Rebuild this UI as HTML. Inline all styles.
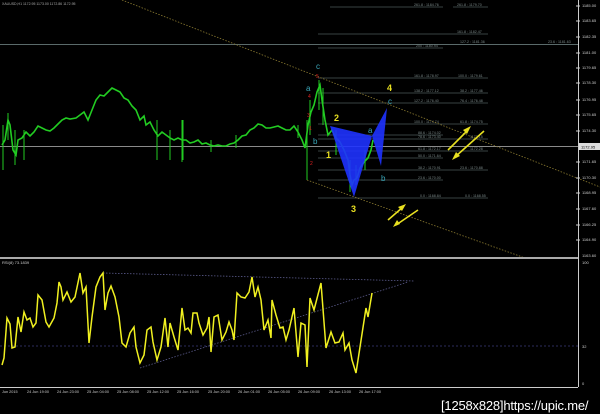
<!DOCTYPE html>
<html><head><meta charset="utf-8"><style>
html,body{margin:0;padding:0;background:#000;width:600px;height:414px;overflow:hidden}
svg{display:block}
text{font-family:"Liberation Sans",sans-serif}
</style></head><body>
<svg width="600" height="414" viewBox="0 0 600 414" xmlns="http://www.w3.org/2000/svg">
<rect width="600" height="414" fill="#000"/>
<text x="2" y="5" font-size="3.5" fill="#aaa">XAUUSD,H1  1172.95 1173.00 1172.86 1172.95</text>
<line x1="0" y1="44.5" x2="578" y2="44.5" stroke="#5a6a6a" stroke-width="1"/>
<line x1="0" y1="146.5" x2="578" y2="146.5" stroke="#8a8a8a" stroke-width="1"/>
<g stroke="#4a5858" stroke-width="0.8">
<line x1="330" y1="7" x2="443" y2="7"/><line x1="453" y1="7" x2="488" y2="7"/>
<line x1="318" y1="34" x2="488" y2="34"/>
<line x1="318" y1="48" x2="443" y2="48"/>
<line x1="318" y1="78" x2="488" y2="78"/>
<line x1="318" y1="93" x2="488" y2="93"/>
<line x1="318" y1="103" x2="488" y2="103"/>
<line x1="318" y1="124" x2="488" y2="124"/>
<line x1="318" y1="135" x2="443" y2="135"/>
<line x1="318" y1="139" x2="488" y2="139"/>
<line x1="318" y1="151" x2="488" y2="151"/>
<line x1="318" y1="158" x2="443" y2="158"/>
<line x1="318" y1="170" x2="488" y2="170"/>
<line x1="318" y1="180" x2="443" y2="180"/>
<line x1="318" y1="198" x2="488" y2="198"/>
</g>
<g font-size="3.6" fill="#7a8888">
<text x="414" y="6">261.8 : 1184.76</text><text x="457" y="6">261.8 : 1179.70</text>
<text x="457" y="33">161.8 : 1182.47</text>
<text x="460" y="43">127.2 : 1181.36</text><text x="548" y="43">23.6 : 1181.63</text>
<text x="416" y="47">200 : 1180.94</text>
<text x="414" y="77">161.8 : 1178.97</text><text x="458" y="77">100.0 : 1179.61</text>
<text x="414" y="92">138.2 : 1177.12</text><text x="460" y="92">38.2 : 1177.46</text>
<text x="414" y="102">127.2 : 1176.40</text><text x="460" y="102">76.4 : 1176.48</text>
<text x="414" y="123">100.0 : 1174.74</text><text x="460" y="123">61.8 : 1174.75</text>
<text x="418" y="134">88.6 : 1174.02</text>
<text x="418" y="138">78.6 : 1173.40</text><text x="470" y="138">1173.15</text>
<text x="418" y="150">61.8 : 1172.17</text><text x="470" y="150">1172.28</text>
<text x="418" y="157">50.0 : 1171.64</text>
<text x="418" y="169">38.2 : 1170.91</text><text x="460" y="169">23.6 : 1170.88</text>
<text x="418" y="179">23.6 : 1170.00</text>
<text x="420" y="197">0.0 : 1168.84</text><text x="465" y="197">0.0 : 1168.55</text>
</g>
<line x1="122" y1="0" x2="600" y2="187" stroke="#8a7a30" stroke-width="0.8" stroke-dasharray="1.5,1.5"/>
<line x1="307" y1="180" x2="525" y2="258" stroke="#8a7a30" stroke-width="0.8" stroke-dasharray="1.5,1.5"/>
<polyline fill="none" stroke="#22cc22" stroke-width="1.6" points="2,145 5,140 8,120 10,125 13,150 16,155 18,140 22,138 26,132 30,136 34,132 38,126 42,128 46,130 50,131 54,128 58,124 62,120 66,118 70,119 76,118 80,115 84,112 88,120 92,110 96,100 100,95 104,96 108,92 112,88 116,90 120,92 124,98 128,100 132,106 136,110 140,120 144,116 146,125 150,122 154,130 158,136 162,132 166,135 170,138 174,140 178,138 182,140 186,140 190,143 194,142 198,140 202,144 206,143 210,145 214,146 218,145 222,146 226,146 230,144 234,143 238,140 242,136 246,135 250,130 254,128 258,124 262,125 266,128 270,128 274,127 278,126 282,128 286,130 290,130 294,126 298,132 302,140 305,148 308,125 311,112 314,105 317,92 320,85 322,100 325,120 328,135 332,130 336,138 340,142 344,150 348,160 350,175 352,185 354,180 357,178 360,168 364,162 368,158 371,150 373,140"/>
<g stroke="#22cc22" stroke-width="1">
<line x1="3" y1="125" x2="3" y2="170"/><line x1="8" y1="113" x2="8" y2="140"/><line x1="15" y1="130" x2="15" y2="165"/><line x1="24" y1="130" x2="24" y2="160"/>
<line x1="157" y1="120" x2="157" y2="160"/><line x1="170" y1="130" x2="170" y2="160"/><line x1="182" y1="120" x2="182" y2="162"/><line x1="183" y1="120" x2="183" y2="160"/>
<line x1="211" y1="140" x2="211" y2="152"/><line x1="236" y1="135" x2="236" y2="148"/><line x1="298" y1="125" x2="298" y2="138"/>
<line x1="307" y1="120" x2="307" y2="180"/><line x1="310" y1="100" x2="310" y2="135"/><line x1="319" y1="80" x2="319" y2="110"/><line x1="323" y1="88" x2="323" y2="125"/>
<line x1="336" y1="130" x2="336" y2="155"/><line x1="350" y1="160" x2="350" y2="192"/><line x1="356" y1="165" x2="356" y2="185"/><line x1="365" y1="150" x2="365" y2="170"/>
</g>
<polygon points="330,126 354,197 372,136" fill="#1e32ff" opacity="0.9"/>
<polygon points="372,136 387,108 381,166" fill="#1e32ff" opacity="0.9"/>
<g font-size="8" fill="#3aa6b8">
<text x="316" y="69">c</text><text x="306" y="91">a</text><text x="313" y="144">b</text>
<text x="368" y="133">a</text><text x="388" y="104">c</text><text x="381" y="181">b</text>
</g>
<g font-size="5" fill="#dd2222">
<text x="316" y="78">5</text><text x="308" y="98">4</text><text x="307" y="117">3</text><text x="309" y="130">1</text><text x="310" y="165">2</text>
</g>
<g font-size="9" font-weight="bold" fill="#e8e020">
<text x="387" y="91">4</text><text x="334" y="121">2</text><text x="326" y="158">1</text><text x="351" y="212">3</text>
</g>
<g stroke="#e8e020" stroke-width="1.6" fill="#e8e020">
<line x1="448" y1="150" x2="468" y2="130"/><polygon points="471,126 463,130 467,134" stroke="none"/>
<line x1="484" y1="131" x2="455" y2="157"/><polygon points="452,160 456,152 460,156" stroke="none"/>
<line x1="388" y1="220" x2="403" y2="207"/><polygon points="406,204 398,207 402,211" stroke="none"/>
<line x1="418" y1="210" x2="396" y2="225"/><polygon points="393,227 397,220 400,224" stroke="none"/>
</g>
<line x1="578.5" y1="0" x2="578.5" y2="387" stroke="#ccc" stroke-width="1"/>
<g font-size="4" fill="#ccc">
<text x="582" y="7">1185.00</text><text x="582" y="22">1183.65</text><text x="582" y="38">1182.35</text>
<text x="582" y="54">1181.00</text><text x="582" y="69">1179.65</text><text x="582" y="84">1178.30</text>
<text x="582" y="101">1176.95</text><text x="582" y="116">1175.65</text><text x="582" y="132">1174.30</text>
<text x="582" y="163">1171.65</text><text x="582" y="179">1170.30</text><text x="582" y="194">1168.95</text>
<text x="582" y="210">1167.60</text><text x="582" y="226">1166.25</text><text x="582" y="241">1164.90</text>
<text x="582" y="257">1163.60</text>
<text x="582" y="264">100</text><text x="582" y="348">32</text><text x="582" y="385">0</text>
</g>
<rect x="579" y="143" width="21" height="7" fill="#ddd"/>
<text x="581" y="148.5" font-size="4" fill="#000">1172.95</text>
<g stroke="#ccc" stroke-width="1">
<line x1="576" y1="6" x2="580" y2="6"/><line x1="576" y1="21" x2="580" y2="21"/><line x1="576" y1="37" x2="580" y2="37"/><line x1="576" y1="53" x2="580" y2="53"/><line x1="576" y1="68" x2="580" y2="68"/><line x1="576" y1="83" x2="580" y2="83"/><line x1="576" y1="100" x2="580" y2="100"/><line x1="576" y1="115" x2="580" y2="115"/><line x1="576" y1="131" x2="580" y2="131"/><line x1="576" y1="162" x2="580" y2="162"/><line x1="576" y1="178" x2="580" y2="178"/><line x1="576" y1="193" x2="580" y2="193"/><line x1="576" y1="209" x2="580" y2="209"/><line x1="576" y1="225" x2="580" y2="225"/><line x1="576" y1="240" x2="580" y2="240"/>
</g>
<rect x="0" y="257" width="578" height="2" fill="#aaa"/>
<text x="2" y="264" font-size="4" fill="#ccc">RSI(8) 73.1839</text>
<line x1="0" y1="346" x2="578" y2="346" stroke="#3a3a7a" stroke-width="0.8" stroke-dasharray="2,2"/>
<line x1="103" y1="273" x2="414" y2="281" stroke="#5a5a8a" stroke-width="0.8" stroke-dasharray="1.5,1.5"/>
<line x1="140" y1="368" x2="408" y2="282" stroke="#5a5a8a" stroke-width="0.8" stroke-dasharray="1.5,1.5"/>
<polyline fill="none" stroke="#f0f020" stroke-width="1.5" points="2,365 4,358 7,318 10,324 12,348 15,347 18,317 21,332 24,312 27,320 30,318 33,327 36,323 38,295 42,300 46,322 49,327 54,318 57,303 59,282 61,287 63,300 67,292 71,302 75,297 80,273 83,293 86,287 89,343 92,317 96,287 100,277 103,273 105,310 108,293 111,286 115,297 119,317 122,343 126,347 130,333 134,327 136,347 140,363 144,355 147,330 151,327 153,342 157,360 161,347 165,318 168,347 170,323 174,337 178,350 182,308 185,330 188,328 191,333 193,313 197,313 199,323 203,335 207,328 209,317 211,352 214,317 218,315 222,340 226,332 229,322 232,330 234,340 237,293 241,297 245,298 249,292 252,277 255,297 258,287 261,300 264,330 268,320 271,338 272,300 276,315 280,328 283,327 286,340 289,330 294,308 298,357 301,323 305,325 307,367 310,298 314,310 321,283 326,348 331,332 335,343 339,342 343,333 345,350 349,343 352,360 356,373 360,347 366,308 368,317 372,293"/>
<line x1="0" y1="387.5" x2="578" y2="387.5" stroke="#ccc" stroke-width="1"/>
<g font-size="3.8" fill="#ccc">
<text x="2" y="393">Jun 2015</text><text x="27" y="393">24 Jun 19:00</text><text x="57" y="393">24 Jun 23:00</text>
<text x="87" y="393">25 Jun 04:00</text><text x="117" y="393">25 Jun 08:00</text><text x="147" y="393">25 Jun 12:00</text>
<text x="177" y="393">25 Jun 16:00</text><text x="208" y="393">25 Jun 20:00</text><text x="238" y="393">26 Jun 01:00</text>
<text x="268" y="393">26 Jun 05:00</text><text x="298" y="393">26 Jun 09:00</text><text x="329" y="393">26 Jun 13:00</text>
<text x="359" y="393">26 Jun 17:00</text>
</g>
<text x="441" y="410" font-size="13" fill="#fff" letter-spacing="-0.2" font-family="DejaVu Sans Mono, monospace">[1258x828]https://upic.me/</text>
</svg>
</body></html>
